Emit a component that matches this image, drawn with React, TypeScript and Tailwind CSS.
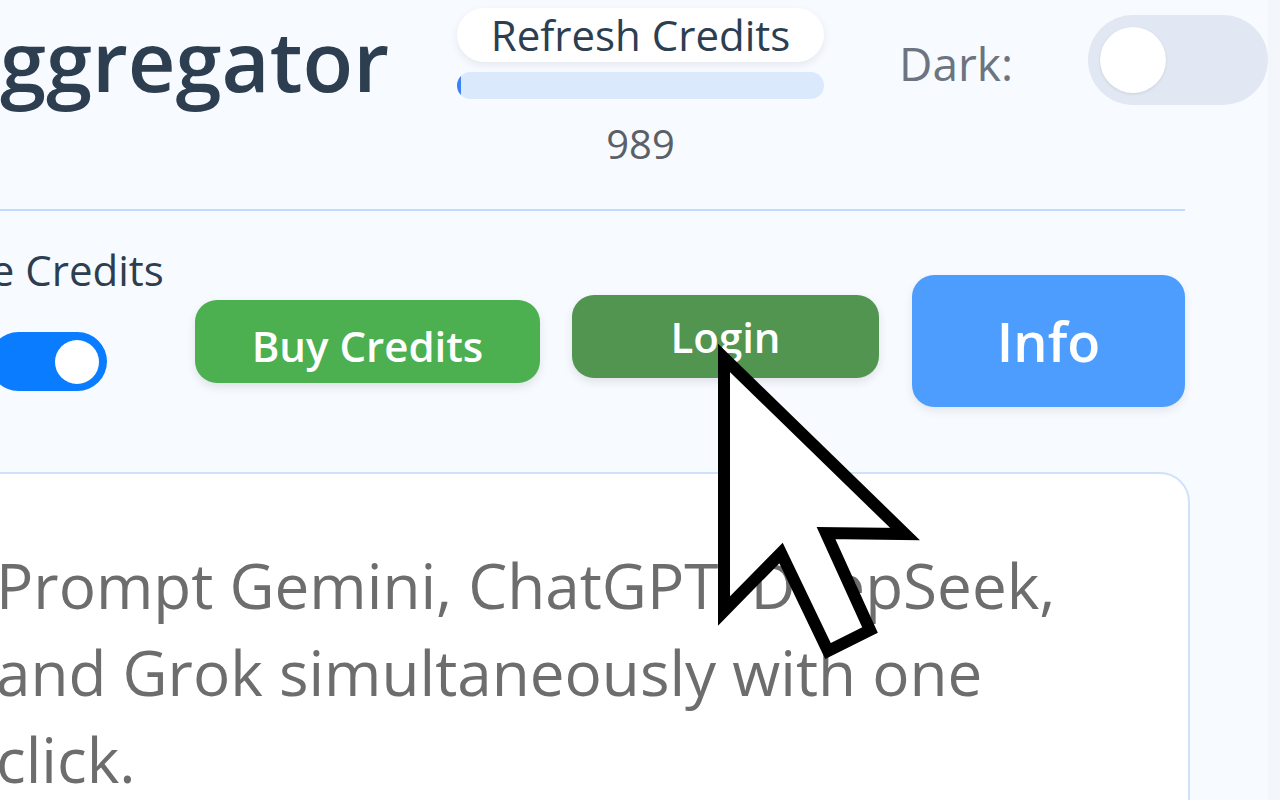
export default function App() {
	return (
		<div className="relative flex w-[1280px] h-[800px] overflow-hidden bg-[#f3f6fb] font-['Open_Sans',sans-serif]">
			<div className="w-[1268px] h-full overflow-hidden bg-[#f7faff]">
				{/* HEADER */}
				<div className="flex items-start h-[209px]">
					<div className="w-[389px] flex justify-end">
						<h1 className="mt-[18px] whitespace-nowrap text-[83px] leading-none font-semibold text-[#2c3e50]">
							AI A<span className="ml-[4px]">ggregator</span>
						</h1>
					</div>

					<div className="ml-[68px] mt-[8px] w-[371px] flex flex-col items-center">
						<button className="w-full h-[54px] rounded-full bg-white text-[42px] leading-none text-[#2c3e50] shadow-[0_3px_8px_rgba(0,0,0,0.08)]">
							Refresh Credits
						</button>
						<div className="mt-[10px] w-full h-[27px] rounded-full bg-[#dbe9fc] overflow-hidden">
							<div className="w-[4px] h-full bg-[#3b82f6]" />
						</div>
						<span className="mt-[25px] text-[40px] leading-none text-[#5b6068]">
							989
						</span>
					</div>

					<span className="ml-[75px] mt-[40px] text-[46px] leading-none text-[#6c7480]">
						Dark:
					</span>

					<div className="ml-[75px] mt-[15px] shrink-0 w-[180px] h-[90px] rounded-full bg-[#e1e8f4] flex items-center pl-[12px]">
						<div className="w-[66px] h-[66px] rounded-full bg-white shadow-[0_1px_3px_rgba(0,0,0,0.1)]" />
					</div>
				</div>

				<div className="w-[1185px] h-[2px] bg-[#c2dafc]" />

				{/* CONTROLS */}
				<div className="flex items-start">
					<div className="ml-[-68px] w-[240px] flex flex-col items-center">
						<span className="mt-[35px] whitespace-nowrap text-[42px] leading-[48px] text-[#2c3e50]">
							Use Credits
						</span>
						<div className="mt-[38px] mr-[8px] w-[118px] h-[59px] rounded-full bg-[#0a7cff] flex items-center justify-end pr-[8px]">
							<div className="w-[44px] h-[44px] rounded-full bg-white" />
						</div>
					</div>

					<button className="ml-[23px] mt-[89px] w-[345px] h-[83px] rounded-[22px] bg-[#4caf50] text-white text-[42px] font-semibold leading-none pt-[8px] shadow-[0_4px_10px_rgba(0,0,0,0.1)]">
						Buy Credits
					</button>

					<button className="ml-[32px] mt-[84px] w-[307px] h-[83px] rounded-[22px] bg-[#519550] text-white text-[42px] font-semibold leading-none shadow-[0_4px_10px_rgba(0,0,0,0.1)]">
						Login
					</button>

					<button className="ml-[33px] mt-[64px] w-[273px] h-[132px] rounded-[22px] bg-[#4d9dff] text-white text-[54px] font-semibold leading-none shadow-[0_4px_10px_rgba(0,0,0,0.08)]">
						Info
					</button>
				</div>

				{/* DESCRIPTION */}
				<div className="mt-[65px] ml-[-40px] w-[1230px] h-[420px] rounded-[30px] border-2 border-[#cfe2fb] bg-white pt-[68px] pl-[34px] pr-[82px]">
					<p className="text-[62px] leading-[87px] text-[#6d6d6d]">
						Prompt Gemini, ChatGPT, DeepSeek, and Grok simultaneously with one
						click.
					</p>
				</div>
			</div>

			{/* cursor */}
			<svg
				className="absolute inset-0 pointer-events-none"
				width="1280"
				height="800"
				viewBox="0 0 1280 800"
			>
				<polygon
					points="724,358 724,611 781,553 828,651 870,630 826,533 905,534"
					fill="#fff"
					stroke="#000"
					strokeWidth="12"
					strokeLinejoin="miter"
				/>
			</svg>
		</div>
	);
}
